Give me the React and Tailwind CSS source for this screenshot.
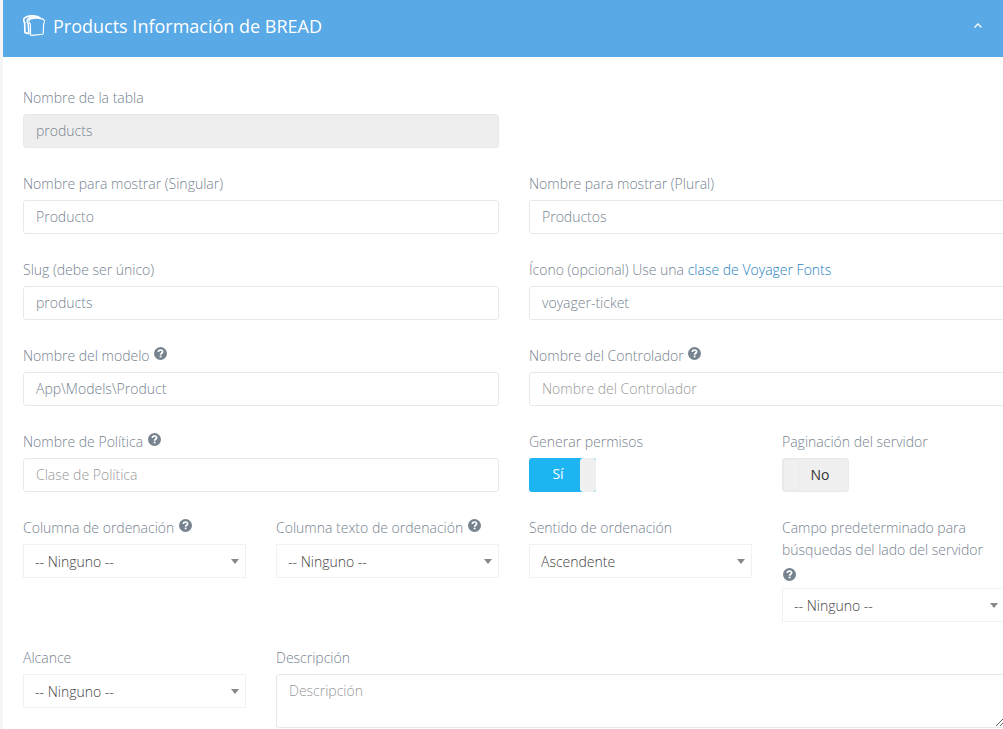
import React, { useState } from "react";

function HelpIcon() {
  return (
    <svg className="ml-px inline-block size-[13px] align-[1px]" viewBox="0 0 13 13" role="img" aria-label="Ayuda">
      <circle cx="6.5" cy="6.5" r="6.5" fill="#76838f" />
      <path d="M4.400 5C4.400 3.600 5.300 3 6.500 3s2.100.7 2.100 1.700c0 1.500-2 1.500-2 3" fill="none" stroke="#fff" strokeWidth="1.700" />
      <rect x="5.700" y="8.600" width="1.800" height="1.700" fill="#fff" />
    </svg>
  );
}

function BreadIcon() {
  return (
    <svg className="h-[22px] w-[22px] shrink-0" viewBox="0 0 22 22" fill="none" stroke="#fff" strokeLinejoin="round">
      <path d="M7.400 9C5.500 8 5 4.600 7.800 3.900c3.500-.9 8.400-.8 11.500 0 2.800.8 2.700 3.600 1.300 4.700l-.3 9.700c0 .6-.4.9-1 .9l-10.500 1.200c-.8 0-1.200-.4-1.200-1z" strokeWidth="1.100" />
      <path d="M5.300 18.400l-2.600-.5c-.5-.1-.8-.4-.8-.9L1.700 7.500C.2 6.500.2 3.200 2.700 2.200 5.800.7 11 .4 15.700 1.900" strokeWidth="1.700" />
      <path d="M6 19.500L5.200 8.500C3.700 7.300 3.800 4.500 6 3.300c2.600-1.300 7.500-1.500 11.500-.5" strokeWidth="1.600" />
    </svg>
  );
}

function Field({ id, label, help, children, className = "" }) {
  return (
    <div className={className}>
      <label htmlFor={id} className="mb-[5px] inline-block">
        {label}
      </label>
      {help && <> <HelpIcon /></>}
      {children}
    </div>
  );
}

function TextInput(props) {
  return (
    <input
      type="text"
      className="block h-[34px] w-full rounded-[3px] border border-[#e4eaec] bg-white px-3 pt-1 pb-[6px] font-light text-[#76838f] outline-none placeholder:text-[#999999] disabled:bg-[#eeeeee]"
      {...props}
    />
  );
}

function Select({ id, options }) {
  return (
    <div className="relative">
      <select id={id} className="block h-[34px] w-full appearance-none border border-[#f1f1f1] bg-white pt-[2px] pr-6 pl-[11px] font-light text-[#444444] outline-none">
        {options.map((option) => (
          <option key={option}>{option}</option>
        ))}
      </select>
      <svg className="pointer-events-none absolute top-[15px] right-[7px] h-[5px] w-2" viewBox="0 0 8 5">
        <path d="M0 0h8L4 5z" fill="#888888" />
      </svg>
    </div>
  );
}

function Toggle({ id, initial }) {
  const [on, setOn] = useState(initial);
  return (
    <span className="relative block h-[34px] w-[67px]">
      <input
        id={id}
        type="checkbox"
        role="switch"
        checked={on}
        onChange={() => setOn(!on)}
        className="absolute inset-0 z-10 m-0 size-full cursor-pointer opacity-0"
      />
      {on ? (
        <span className="flex h-full overflow-hidden rounded-[3px] bg-[#1cb4f1] leading-8 font-normal text-white">
          <span className="flex-1 pl-[7px] text-center">Sí</span>
          <span className="w-4 rounded-[3px] border border-[#efefef] bg-[#f0f0f0]" />
        </span>
      ) : (
        <span className="flex h-full rounded-[3px] border border-[#e9e9e9] bg-[#efefef] leading-8 font-normal text-[#333333]">
          <span className="w-4 rounded-[3px] border border-[#e9e9e9] bg-[#f0f0f0]" />
          <span className="flex-1 pr-[7px] text-center">No</span>
        </span>
      )}
    </span>
  );
}

export default function App() {
  return (
    <div className="overflow-x-clip bg-[#f5f5f5] pl-[3px] font-['Open_Sans',sans-serif] text-sm leading-[22px] font-light text-[#76838f]">
      <main className="bg-white">
        <header className="flex h-[57px] items-center justify-between bg-[#58a9e6] px-5 pb-[6px] text-white">
          <h3 className="flex items-center gap-2 text-lg font-normal">
            <BreadIcon />
            Products Información de BREAD
          </h3>
          <button type="button" aria-label="Contraer panel" className="flex h-6 w-[10px] items-center justify-center">
            <svg className="h-[5px] w-2" viewBox="0 0 8 5" fill="none" stroke="#fff">
              <path d="M.5 4.500L4 1l3.500 3.500" strokeWidth="1.300" />
            </svg>
          </button>
        </header>

        <form className="-mr-[2px] grid grid-cols-4 gap-x-[30px] gap-y-[25px] pt-[30px] pb-px pl-5">
          <Field id="table" label="Nombre de la tabla" className="col-span-2">
            <TextInput id="table" defaultValue="products" disabled />
          </Field>
          <Field id="singular" label="Nombre para mostrar (Singular)" className="col-span-2 col-start-1">
            <TextInput id="singular" defaultValue="Producto" />
          </Field>
          <Field id="plural" label="Nombre para mostrar (Plural)" className="col-span-2">
            <TextInput id="plural" defaultValue="Productos" />
          </Field>
          <Field id="slug" label="Slug (debe ser único)" className="col-span-2">
            <TextInput id="slug" defaultValue="products" />
          </Field>
          <Field
            id="icon"
            label={<>Ícono (opcional) Use una <a href="#fonts" className="text-[#1f7fbf]">clase de Voyager Fonts</a></>}
            className="col-span-2"
          >
            <TextInput id="icon" defaultValue="voyager-ticket" />
          </Field>
          <Field id="model" label="Nombre del modelo" help className="col-span-2">
            <TextInput id="model" defaultValue="App\Models\Product" />
          </Field>
          <Field id="controller" label="Nombre del Controlador" help className="col-span-2">
            <TextInput id="controller" placeholder="Nombre del Controlador" />
          </Field>
          <Field id="policy" label="Nombre de Política" help className="col-span-2">
            <TextInput id="policy" placeholder="Clase de Política" />
          </Field>
          <Field id="permissions" label="Generar permisos">
            <Toggle id="permissions" initial={true} />
          </Field>
          <Field id="pagination" label="Paginación del servidor">
            <Toggle id="pagination" initial={false} />
          </Field>
          <Field id="order-column" label="Columna de ordenación" help>
            <Select id="order-column" options={["-- Ninguno --"]} />
          </Field>
          <Field id="order-text" label="Columna texto de ordenación" help>
            <Select id="order-text" options={["-- Ninguno --"]} />
          </Field>
          <Field id="direction" label="Sentido de ordenación">
            <Select id="direction" options={["Ascendente", "Descendente"]} />
          </Field>
          <Field id="search-key" label="Campo predeterminado para búsquedas del lado del servidor" help>
            <Select id="search-key" options={["-- Ninguno --"]} />
          </Field>
          <Field id="scope" label="Alcance">
            <Select id="scope" options={["-- Ninguno --"]} />
          </Field>
          <Field id="description" label="Descripción" className="col-span-3">
            <textarea
              id="description"
              rows={2}
              placeholder="Descripción"
              className="block h-[54px] w-full resize-y rounded-[3px] border border-[#e4eaec] bg-white px-3 py-[6px] leading-5 font-light text-[#76838f] outline-none placeholder:text-[#999999]"
            />
          </Field>
        </form>
      </main>
    </div>
  );
}
